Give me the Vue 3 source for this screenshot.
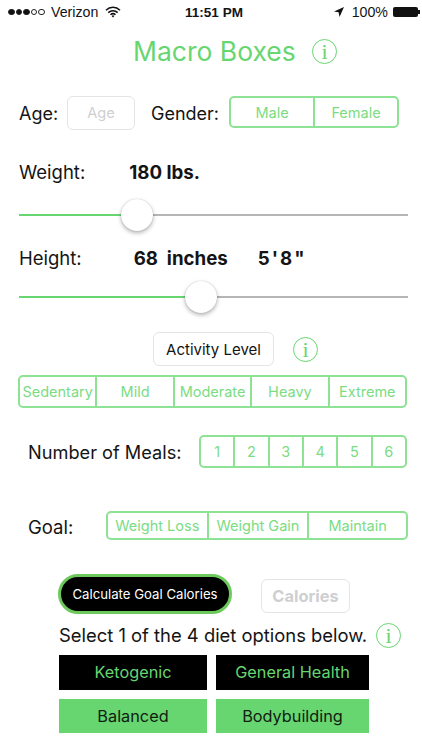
<script setup>
const gender = ['Male', 'Female']
const activity = ['Sedentary', 'Mild', 'Moderate', 'Heavy', 'Extreme']
const meals = ['1', '2', '3', '4', '5', '6']
const goals = ['Weight Loss', 'Weight Gain', 'Maintain']
const sliders = { weight: 30.3, height: 46.8 }
</script>

<template>
  <div class="screen">
    <div class="status">
      <div class="status-left">
        <span class="dots"><i class="on"></i><i class="on"></i><i class="on"></i><i></i><i></i></span>
        <span>Verizon</span>
        <svg class="wifi" width="16" height="12" viewBox="0 0 16 12">
          <path d="M1 4.2a10 10 0 0 1 14 0M3.3 6.6a6.7 6.7 0 0 1 9.4 0M5.5 8.8a3.6 3.6 0 0 1 5 0" fill="none" stroke="#111" stroke-width="1.5"/>
          <path d="M6.6 10 8 11.6 9.4 10a2 2 0 0 0-2.8 0z" fill="#111"/>
        </svg>
      </div>
      <div class="status-time">11:51 PM</div>
      <div class="status-right">
        <svg width="10" height="10" viewBox="0 0 10 10"><path d="M10 0 0 4.4l4.6.9.9 4.7z" fill="#111"/></svg>
        <span class="pct">100%</span>
        <span class="battery"></span>
      </div>
    </div>

    <div class="title-row">
      <h1>Macro Boxes</h1>
      <span class="info info-title">i</span>
    </div>

    <div class="age-row">
      <span class="label age-label">Age:</span>
      <span class="ghost age-box">Age</span>
      <span class="label gender-label">Gender:</span>
      <div class="seg gender-seg">
        <span v-for="g in gender" :key="g">{{ g }}</span>
      </div>
    </div>

    <div class="value-row weight-row">
      <span class="label">Weight:</span>
      <b class="weight-val">180 lbs.</b>
    </div>
    <div class="slider weight-slider">
      <div class="fill" :style="{ width: sliders.weight + '%' }"></div>
      <div class="thumb" :style="{ left: sliders.weight + '%' }"></div>
    </div>

    <div class="value-row height-row">
      <span class="label">Height:</span>
      <b class="height-val">68&nbsp; inches</b>
      <b class="feet-val">5'8"</b>
    </div>
    <div class="slider height-slider">
      <div class="fill" :style="{ width: sliders.height + '%' }"></div>
      <div class="thumb" :style="{ left: sliders.height + '%' }"></div>
    </div>

    <div class="activity-row">
      <span class="activity-btn">Activity Level</span>
      <span class="info">i</span>
    </div>
    <div class="seg activity-seg">
      <span v-for="a in activity" :key="a">{{ a }}</span>
    </div>

    <div class="meals-row">
      <span class="label meals-label">Number of Meals:</span>
      <div class="seg meals-seg">
        <span v-for="m in meals" :key="m">{{ m }}</span>
      </div>
    </div>

    <div class="goal-row">
      <span class="label">Goal:</span>
      <div class="seg goal-seg">
        <span v-for="g in goals" :key="g">{{ g }}</span>
      </div>
    </div>

    <div class="calc-row">
      <span class="calc">Calculate Goal Calories</span>
      <span class="ghost calories">Calories</span>
    </div>

    <div class="select-row">
      <span class="label">Select 1 of the 4 diet options below.</span>
      <span class="info">i</span>
    </div>

    <div class="diet-grid">
      <span class="diet dark">Ketogenic</span>
      <span class="diet dark">General Health</span>
      <span class="diet green">Balanced</span>
      <span class="diet green">Bodybuilding</span>
    </div>
  </div>
</template>

<style scoped>
.screen {
  width: 422px;
  height: 750px;
  overflow: hidden;
  background: #fff;
  font-family: Inter, "Liberation Sans", sans-serif;
  color: #141414;
}
.status {
  height: 24px;
  padding: 0 2px 0 8px;
  display: flex;
  align-items: center;
  justify-content: space-between;
  font-size: 14.2px;
  font-family: "Liberation Sans", sans-serif;
}
.status-left { display: flex; align-items: center; width: 152px; gap: 6px; }
.status-time { font-weight: 700; font-size: 13.5px; }
.status-right { display: flex; align-items: center; justify-content: flex-end; width: 152px; gap: 5px; }
.status-right svg { margin-right: 3px; }
.dots { display: flex; gap: 1px; }
.dots i { width: 6.6px; height: 6.6px; border-radius: 50%; border: 1px solid #222; box-sizing: border-box; }
.dots i.on { background: #111; }
.wifi { margin-left: 1px; }
.battery {
  width: 25px;
  height: 10px;
  margin-right: 2px;
  background: #111;
  border-radius: 2px;
  position: relative;
}
.battery::after {
  content: "";
  position: absolute;
  right: -2px;
  top: 3px;
  width: 2px;
  height: 4px;
  background: #111;
}
.title-row {
  display: flex;
  align-items: center;
  margin: 9px 0 0 133px;
  height: 36px;
}
h1 {
  margin: 0;
  font-weight: 400;
  font-size: 26.5px;
  color: #68d670;
  width: 179px;
  white-space: nowrap;
}
.info {
  width: 25px;
  height: 25px;
  box-sizing: border-box;
  border: 1px solid #68d670;
  border-radius: 50%;
  color: #68d670;
  font-family: "Liberation Serif", serif;
  font-size: 22px;
  line-height: 23px;
  text-align: center;
  flex: none;
}
.label { font-size: 18.5px; white-space: nowrap; }
.age-row {
  display: flex;
  align-items: center;
  margin: 27px 0 0 19px;
  height: 34px;
}
.age-label { width: 48px; font-size: 18px; }
.ghost {
  box-sizing: border-box;
  border: 1px solid #e4e4e4;
  border-radius: 6px;
  color: #cfcfd2;
  display: flex;
  align-items: center;
  justify-content: center;
}
.age-box { width: 68px; height: 34px; font-size: 14.6px; }
.gender-label { margin-left: 16px; width: 78px; font-size: 18px; }
.seg {
  display: flex;
  box-sizing: border-box;
  border: 2px solid #8ee294;
  border-radius: 5px;
  color: #7bdc82;
  font-size: 14.5px;
}
.seg span {
  flex: 1 1 0;
  min-width: 0;
  display: flex;
  align-items: center;
  justify-content: center;
  white-space: nowrap;
}
.seg span + span { border-left: 2px solid #8ee294; }
.gender-seg { width: 170px; height: 32px; margin-top: -2px; }
.value-row { display: flex; align-items: center; height: 26px; margin-left: 19px; }
.value-row b { font-size: 18.7px; font-weight: 700; }
.weight-row { margin-top: 29px; }
.weight-val { margin-left: 44px; }
.slider {
  position: relative;
  width: 389px;
  height: 2px;
  margin-left: 19px;
  background: #b5b5b5;
}
.fill { height: 100%; background: #68d670; }
.thumb {
  position: absolute;
  top: 1px;
  width: 32px;
  height: 32px;
  margin: -16px 0 0 -16px;
  border-radius: 50%;
  background: #fff;
  box-shadow: 0 2px 4px rgba(0, 0, 0, .3), 0 0 1px rgba(0, 0, 0, .25);
}
.weight-slider { margin-top: 29px; }
.height-row { margin-top: 29px; }
.height-val { margin-left: 52px; }
.feet-val { margin-left: 30px; letter-spacing: 2px; }
.height-slider { margin-top: 25px; }
.activity-row {
  display: flex;
  align-items: center;
  margin: 34px 0 0 153px;
  height: 34px;
}
.activity-btn {
  box-sizing: border-box;
  width: 121px;
  height: 34px;
  border: 1px solid #e4e4e4;
  border-radius: 6px;
  display: flex;
  align-items: center;
  justify-content: center;
  font-size: 15px;
  margin-right: 19px;
}
.activity-seg { width: 389px; height: 33px; margin: 9px 0 0 18px; }
.meals-row {
  display: flex;
  align-items: center;
  justify-content: space-between;
  width: 379px;
  height: 33px;
  margin: 27px 0 0 28px;
}
.meals-label { font-size: 18.2px; }
.meals-seg { width: 208px; height: 33px; }
.goal-row {
  display: flex;
  align-items: center;
  justify-content: space-between;
  width: 380px;
  margin: 43px 0 0 28px;
}
.goal-row .label { margin-top: 3px; }
.goal-seg { width: 302px; height: 29px; }
.goal-seg span:last-child { flex-grow: .98; }
.calc-row {
  display: flex;
  align-items: center;
  margin: 34px 0 0 58px;
}
.calc {
  box-sizing: border-box;
  width: 174px;
  height: 40px;
  border: 3px solid #6dc95c;
  border-radius: 20px;
  background: #000;
  color: #fff;
  font-size: 13.2px;
  display: flex;
  align-items: center;
  justify-content: center;
  white-space: nowrap;
}
.calories {
  width: 89px;
  height: 34px;
  margin: 4px 0 0 29px;
  font-weight: 700;
  font-size: 16.4px;
}
.select-row {
  display: flex;
  align-items: center;
  margin: 8px 0 0 59px;
  height: 26px;
}
.select-row .label { width: 317px; font-size: 18.4px; }
.diet-grid {
  display: grid;
  grid-template-columns: 148px 153px;
  grid-auto-rows: 34.5px;
  gap: 9px;
  margin: 7px 0 0 59px;
}
.diet {
  display: flex;
  align-items: center;
  justify-content: center;
  font-size: 16.3px;
}
.dark { background: #000; color: #68d670; }
.green { background: #68d670; color: #102010; }
</style>

<style>
body { margin: 0; }
</style>
